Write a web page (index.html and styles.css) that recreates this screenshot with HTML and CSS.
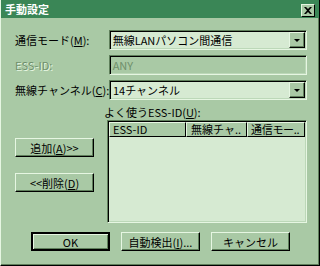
FILE: index.html
```html
<!DOCTYPE html>
<html lang="ja">
<head>
  <meta charset="UTF-8">
  <meta name="viewport" content="width=device-width, initial-scale=1.0">
  <title>手動設定</title>
  <link rel="stylesheet" href="styles.css">
</head>
<body>
  <div class="window">
    <div class="titlebar">
      <span class="title">手動設定</span>
      <span class="close">
        <svg width="8" height="7" viewBox="0 0 8 7"><path d="M0 0h2l2 2 2-2h2L5 3.5 8 7H6L4 5 2 7H0l3-3.5z" fill="#000"/></svg>
      </span>
    </div>

    <div class="content">
      <div class="row">
        <label class="label">通信モード(<u>M</u>):</label>
        <div class="field combo">
          <span class="value">無線LANパソコン間通信</span>
          <span class="drop"><i class="arrow"></i></span>
        </div>
      </div>
      <div class="row">
        <label class="label disabled">ESS-ID:</label>
        <div class="field input disabled-field">
          <span class="value">ANY</span>
        </div>
      </div>
      <div class="row">
        <label class="label">無線チャンネル(<u>C</u>):</label>
        <div class="field combo">
          <span class="value">14チャンネル</span>
          <span class="drop"><i class="arrow"></i></span>
        </div>
      </div>

      <div class="middle">
        <div class="side">
          <button class="btn">追加(<u>A</u>)&gt;&gt;</button>
          <button class="btn second">&lt;&lt;削除(<u>D</u>)</button>
        </div>
        <div class="list-area">
          <div class="list-label">よく使うESS-ID(<u>U</u>):</div>
          <div class="listview">
            <div class="header">
              <span class="col c1">ESS-ID</span>
              <span class="col c2">無線チャ..</span>
              <span class="col c3">通信モー..</span>
            </div>
          </div>
        </div>
      </div>

      <div class="footer">
        <button class="btn default">OK</button>
        <button class="btn">自動検出(<u>I</u>)...</button>
        <button class="btn">キャンセル</button>
      </div>
    </div>
  </div>
</body>
</html>
```

FILE: styles.css
```css
body {
  margin: 0;
  background-color: #a9c9a5;
  font-family: "Noto Sans CJK JP", "Noto Sans", sans-serif;
  font-size: 11px;
  color: #000;
}
.window {
  width: 320px;
  height: 266px;
  box-sizing: border-box;
  background-color: #a9c9a5;
  border-left: 1px solid #e6f6e2;
  border-right: 1px solid #000;
  border-bottom: 1px solid #000;
  box-shadow: inset -1px -1px #5f7f5b;
  display: flex;
  flex-direction: column;
}
.titlebar {
  height: 18px;
  background-color: #3a8656;
  color: #fff;
  display: flex;
  align-items: center;
  justify-content: space-between;
  padding: 0 4px 0 4px;
}
.title {
  font-weight: bold;
  line-height: 18px;
}
.close {
  width: 14px;
  height: 13px;
  box-sizing: border-box;
  margin-top: 3px;
  background-color: #a9c9a5;
  border-top: 1px solid #e6f6e2;
  border-left: 1px solid #e6f6e2;
  border-right: 1px solid #000;
  border-bottom: 1px solid #000;
  display: flex;
  align-items: center;
  justify-content: center;
}
.content {
  padding: 12px 12px 0 12px;
  display: flex;
  flex-direction: column;
}
.row {
  display: flex;
  align-items: center;
  height: 20px;
  margin-bottom: 5px;
}
.label {
  width: 96px;
  padding-left: 2px;
  box-sizing: border-box;
  white-space: nowrap;
}
.label.disabled {
  color: #6f8f6b;
  text-shadow: 1px 1px #e6f6e2;
}
.field {
  width: 199px;
  height: 20px;
  box-sizing: border-box;
  border-top: 1px solid #5f7f5b;
  border-left: 1px solid #5f7f5b;
  border-right: 1px solid #e6f6e2;
  border-bottom: 1px solid #e6f6e2;
  box-shadow: inset 1px 1px #000, inset -1px -1px #bcd8b8;
  background-color: #d6ead2;
  display: flex;
  align-items: center;
  justify-content: space-between;
}
.value {
  padding-left: 3px;
  white-space: nowrap;
}
.disabled-field {
  background-color: #a9c9a5;
  color: #6f8f6b;
}
.drop {
  width: 16px;
  height: 16px;
  box-sizing: border-box;
  margin-right: 1px;
  background-color: #a9c9a5;
  border-top: 1px solid #e6f6e2;
  border-left: 1px solid #e6f6e2;
  border-right: 1px solid #000;
  border-bottom: 1px solid #000;
  box-shadow: inset -1px -1px #5f7f5b;
  display: flex;
  align-items: center;
  justify-content: center;
}
.arrow {
  width: 0;
  height: 0;
  border-left: 3px solid transparent;
  border-right: 3px solid transparent;
  border-top: 3px solid #000;
}
.middle {
  display: flex;
}
.side {
  width: 91px;
  padding: 33px 0 0 2px;
  box-sizing: border-box;
  display: flex;
  flex-direction: column;
}
.btn {
  width: 79px;
  height: 19px;
  padding: 0;
  font: inherit;
  color: #000;
  background-color: #a9c9a5;
  border-top: 1px solid #e6f6e2;
  border-left: 1px solid #e6f6e2;
  border-right: 1px solid #000;
  border-bottom: 1px solid #000;
  box-shadow: inset -1px -1px #5f7f5b;
  white-space: nowrap;
}
.btn.second {
  margin-top: 16px;
}
.btn.default {
  border: 2px solid #000;
  box-shadow: inset 1px 1px #e6f6e2, inset -1px -1px #5f7f5b;
}
.list-area {
  display: flex;
  flex-direction: column;
}
.list-label {
  line-height: 15px;
  white-space: nowrap;
}
.listview {
  width: 200px;
  height: 103px;
  margin-left: 3px;
  box-sizing: border-box;
  border-top: 1px solid #5f7f5b;
  border-left: 1px solid #5f7f5b;
  border-right: 1px solid #e6f6e2;
  border-bottom: 1px solid #e6f6e2;
  box-shadow: inset 1px 1px #000, inset -1px -1px #bcd8b8;
  background-color: #d6ead2;
  padding: 1px;
}
.header {
  display: flex;
  height: 15px;
}
.col {
  box-sizing: border-box;
  height: 15px;
  line-height: 13px;
  padding-left: 3px;
  background-color: #a9c9a5;
  border-top: 1px solid #e6f6e2;
  border-left: 1px solid #e6f6e2;
  border-right: 1px solid #000;
  border-bottom: 1px solid #000;
  white-space: nowrap;
  overflow: hidden;
}
.c1 { width: 77px; }
.c2 { width: 61px; padding-left: 4px; }
.c3 { width: 58px; letter-spacing: -0.3px; }
.footer {
  display: flex;
  gap: 11px;
  margin-top: 9px;
  padding-left: 18px;
}
```
